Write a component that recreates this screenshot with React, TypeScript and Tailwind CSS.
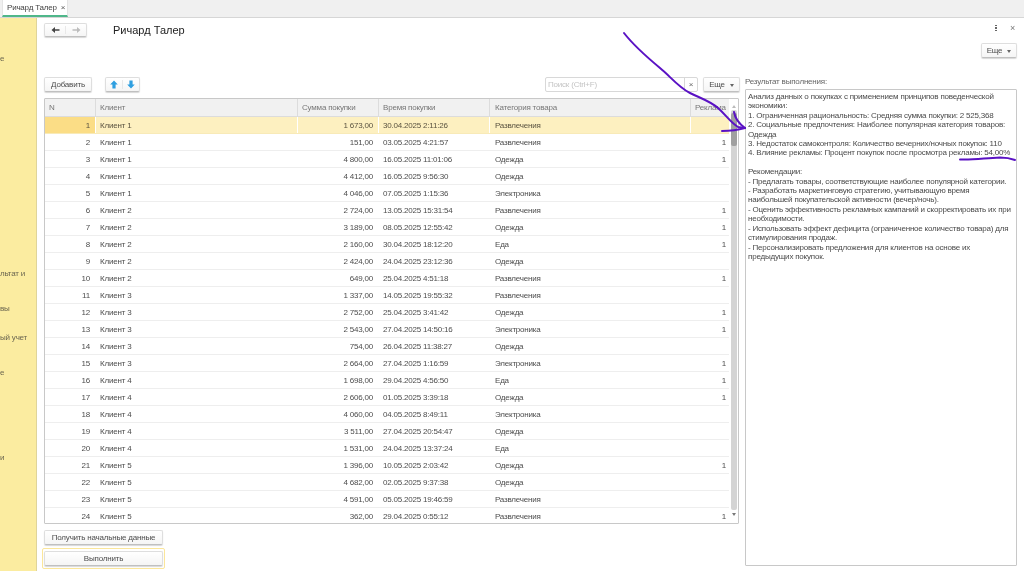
const rows: [number, string, string, string, string, string][] = [
  [1, "Клиент 1", "1 673,00", "30.04.2025 2:11:26", "Развлечения", ""],
  [2, "Клиент 1", "151,00", "03.05.2025 4:21:57", "Развлечения", "1"],
  [3, "Клиент 1", "4 800,00", "16.05.2025 11:01:06", "Одежда", "1"],
  [4, "Клиент 1", "4 412,00", "16.05.2025 9:56:30", "Одежда", ""],
  [5, "Клиент 1", "4 046,00", "07.05.2025 1:15:36", "Электроника", ""],
  [6, "Клиент 2", "2 724,00", "13.05.2025 15:31:54", "Развлечения", "1"],
  [7, "Клиент 2", "3 189,00", "08.05.2025 12:55:42", "Одежда", "1"],
  [8, "Клиент 2", "2 160,00", "30.04.2025 18:12:20", "Еда", "1"],
  [9, "Клиент 2", "2 424,00", "24.04.2025 23:12:36", "Одежда", ""],
  [10, "Клиент 2", "649,00", "25.04.2025 4:51:18", "Развлечения", "1"],
  [11, "Клиент 3", "1 337,00", "14.05.2025 19:55:32", "Развлечения", ""],
  [12, "Клиент 3", "2 752,00", "25.04.2025 3:41:42", "Одежда", "1"],
  [13, "Клиент 3", "2 543,00", "27.04.2025 14:50:16", "Электроника", "1"],
  [14, "Клиент 3", "754,00", "26.04.2025 11:38:27", "Одежда", ""],
  [15, "Клиент 3", "2 664,00", "27.04.2025 1:16:59", "Электроника", "1"],
  [16, "Клиент 4", "1 698,00", "29.04.2025 4:56:50", "Еда", "1"],
  [17, "Клиент 4", "2 606,00", "01.05.2025 3:39:18", "Одежда", "1"],
  [18, "Клиент 4", "4 060,00", "04.05.2025 8:49:11", "Электроника", ""],
  [19, "Клиент 4", "3 511,00", "27.04.2025 20:54:47", "Одежда", ""],
  [20, "Клиент 4", "1 531,00", "24.04.2025 13:37:24", "Еда", ""],
  [21, "Клиент 5", "1 396,00", "10.05.2025 2:03:42", "Одежда", "1"],
  [22, "Клиент 5", "4 682,00", "02.05.2025 9:37:38", "Одежда", ""],
  [23, "Клиент 5", "4 591,00", "05.05.2025 19:46:59", "Развлечения", ""],
  [24, "Клиент 5", "362,00", "29.04.2025 0:55:12", "Развлечения", "1"],
];

const resultLines = [
  "Анализ данных о покупках с применением принципов поведенческой экономики:",
  "1. Ограниченная рациональность: Средняя сумма покупки: 2 525,368",
  "2. Социальные предпочтения: Наиболее популярная категория товаров: Одежда",
  "3. Недостаток самоконтроля: Количество вечерних/ночных покупок: 110",
  "4. Влияние рекламы: Процент покупок после просмотра рекламы: 54,00%",
  "\u00a0",
  "Рекомендации:",
  "- Предлагать товары, соответствующие наиболее популярной категории.",
  "- Разработать маркетинговую стратегию, учитывающую время наибольшей покупательской активности (вечер/ночь).",
  "- Оценить эффективность рекламных кампаний и скорректировать их при необходимости.",
  "- Использовать эффект дефицита (ограниченное количество товара) для стимулирования продаж.",
  "- Персонализировать предложения для клиентов на основе их предыдущих покупок.",
];

const btn =
  "flex items-center justify-center whitespace-nowrap rounded-[2px] border border-[#dedede] border-b-[#c0c0c0] bg-gradient-to-b from-white to-[#f5f5f5] shadow-[0_1px_1px_#d8d8d8]";

function Caret() {
  return <span className="ml-[5px] mt-[2px] h-0 w-0 border-x-[2px] border-t-[3px] border-x-transparent border-t-[#666]" />;
}

function NavArrow({ flip, color }: { flip?: boolean; color: string }) {
  return (
    <svg width="9" height="8" viewBox="0 0 9 8" className={flip ? "rotate-180" : ""}>
      <path d="M0.5 4 L4 1 V3.2 H8.5 V4.8 H4 V7 Z" fill={color} />
    </svg>
  );
}

function BlueArrow({ flip }: { flip?: boolean }) {
  return (
    <svg width="8" height="9" viewBox="0 0 8 9" className={flip ? "rotate-180" : ""}>
      <path d="M4 0.5 L7.8 4.6 H5.6 V8.5 H2.4 V4.6 H0.2 Z" fill="#2f9fe0" />
    </svg>
  );
}

export default function App() {
  return (
    <div className="relative flex h-[571px] w-[1024px] flex-col overflow-hidden bg-white font-['Liberation_Sans',Arial,sans-serif] text-[8px] tracking-[-0.2px] text-[#4d4d4d] blur-[0.3px]">
      {/* Tab strip */}
      <div className="flex h-[18px] shrink-0 border-b border-[#d6d6d6] bg-[#f0f0f0]">
        <div className="ml-[2px] flex h-[17px] w-[66px] items-center whitespace-nowrap border-x border-[#e4e4e4] border-b-2 border-b-[#4fb78a] bg-white pl-[4px] text-[#444]">
          Ричард Талер
          <span className="ml-[4px] text-[8px] text-[#555]">×</span>
        </div>
      </div>

      <div className="flex min-h-0 flex-1">
        {/* Sidebar */}
        <div className="flex w-[37px] shrink-0 flex-col overflow-hidden border-r border-[#dfd49a] bg-[#fbeca0] text-[#6b6650]">
          <div className="mt-[36px] h-[10px] leading-[10px]">е</div>
          <div className="mt-[205px] h-[10px] whitespace-nowrap leading-[10px]">льтат и</div>
          <div className="mt-[25px] h-[10px] leading-[10px]">вы</div>
          <div className="mt-[19px] h-[10px] whitespace-nowrap leading-[10px]">ый учет</div>
          <div className="mt-[25px] h-[10px] leading-[10px]">е</div>
          <div className="mt-[75px] h-[10px] leading-[10px]">и</div>
        </div>

        {/* Main */}
        <div className="flex min-w-0 flex-1 flex-col pl-[7px] pr-[7px]">
          {/* Header */}
          <div className="flex h-[25px] shrink-0 items-start pt-[5px]">
            <div className={`${btn} h-[14px] w-[43px]`}>
              <div className="flex flex-1 justify-center border-r border-[#e8e8e8]">
                <NavArrow color="#444" />
              </div>
              <div className="flex flex-1 justify-center">
                <NavArrow flip color="#bdbdbd" />
              </div>
            </div>
            <div className="ml-[26px] text-[11px] leading-[14px] tracking-normal text-[#222]">Ричард Талер</div>
            <div className="ml-auto flex items-center gap-[13px] pr-[2px] text-[#777]">
              <span className="flex flex-col gap-[1px]">
                <span className="h-[1.5px] w-[1.5px] bg-[#666]" />
                <span className="h-[1.5px] w-[1.5px] bg-[#666]" />
                <span className="h-[1.5px] w-[1.5px] bg-[#666]" />
              </span>
              <span className="text-[9px] leading-[10px]">×</span>
            </div>
          </div>
          <div className="flex h-[34px] shrink-0 justify-end">
            <div className={`${btn} h-[15px] w-[36px]`}>
              Еще
              <Caret />
            </div>
          </div>

          {/* Body */}
          <div className="flex min-h-0 flex-1">
            {/* Left */}
            <div className="flex w-[696px] shrink-0 flex-col">
              <div className="flex h-[21px] shrink-0 items-start">
                <div className={`${btn} h-[15px] w-[48px]`}>Добавить</div>
                <div className={`${btn} ml-[13px] h-[15px] w-[35px]`}>
                  <div className="flex flex-1 justify-center border-r border-[#e8e8e8]">
                    <BlueArrow />
                  </div>
                  <div className="flex flex-1 justify-center">
                    <BlueArrow flip />
                  </div>
                </div>
                <div className="ml-auto flex h-[15px] w-[153px] items-center rounded-[2px] border border-[#d8d8d8] pl-[2px] text-[#c4c4c4]">
                  Поиск (Ctrl+F)
                  <span className="ml-auto flex h-full w-[13px] items-center justify-center border-l border-[#d8d8d8] text-[#666]">×</span>
                </div>
                <div className={`${btn} ml-[5px] h-[15px] w-[37px]`}>
                  Еще
                  <Caret />
                </div>
              </div>

              {/* Table */}
              <div className="flex h-[426px] w-[695px] shrink-0 rounded-[1px] border border-[#c8c8c8]">
                <div className="min-w-0 flex-1">
                  <div className="flex h-[18px] items-center border-b border-[#dcdcdc] bg-[#f1f1f1] leading-[17px] text-[#777]">
                    <div className="h-full w-[50px] pl-[4px]">N</div>
                    <div className="h-full w-[202px] border-l border-[#dcdcdc] pl-[4px]">Клиент</div>
                    <div className="h-full w-[81px] border-l border-[#dcdcdc] pl-[4px]">Сумма покупки</div>
                    <div className="h-full w-[111px] border-l border-[#dcdcdc] pl-[4px]">Время покупки</div>
                    <div className="h-full w-[201px] border-l border-[#dcdcdc] pl-[5px]">Категория товара</div>
                    <div className="h-full flex-1 border-l border-[#dcdcdc] pl-[4px]">Реклама</div>
                  </div>
                  {rows.map((r, i) => {
                    const sel = i === 0;
                    const sep = sel ? "border-white" : "border-transparent";
                    return (
                      <div
                        key={r[0]}
                        className={`flex h-[17px] items-center border-b leading-[17px] ${sel ? "border-b-[#f8eab8] bg-[#fdf0c0] text-[#5a5340]" : "border-b-[#eeeeee]"} ${i === 23 ? "border-b-0" : ""}`}
                      >
                        <div className={`h-full w-[50px] pr-[5px] text-right ${sel ? "bg-[#fbdd86]" : ""}`}>{r[0]}</div>
                        <div className={`h-full w-[202px] border-l pl-[4px] ${sep}`}>{r[1]}</div>
                        <div className={`h-full w-[81px] border-l pr-[5px] text-right ${sep}`}>{r[2]}</div>
                        <div className={`h-full w-[111px] border-l pl-[4px] ${sep}`}>{r[3]}</div>
                        <div className={`h-full w-[201px] border-l pl-[5px] ${sep}`}>{r[4]}</div>
                        <div className={`h-full flex-1 border-l pr-[3px] text-right ${sep}`}>{r[5]}</div>
                      </div>
                    );
                  })}
                </div>
                {/* Scrollbar */}
                <div className="flex w-[9px] shrink-0 flex-col items-center">
                  <span className="mt-[6px] h-0 w-0 border-x-[2px] border-b-[3px] border-x-transparent border-b-[#bbb]" />
                  <div className="mt-[2px] flex h-[400px] w-[6px] flex-col rounded-[2px] bg-[#d4d4d4]">
                    <div className="mt-[3px] h-[33px] w-full rounded-[2px] bg-[#a0a0a0]" />
                  </div>
                  <span className="mt-[3px] h-0 w-0 border-x-[2px] border-t-[3px] border-x-transparent border-t-[#777]" />
                </div>
              </div>

              <div className={`${btn} mt-[6px] h-[15px] w-[119px] shrink-0`}>Получить начальные данные</div>
              <div className="-ml-[2px] mt-[3px] flex h-[21px] w-[123px] shrink-0 items-center justify-center rounded-[2px] border border-[#fbe69a] bg-white">
                <div className={`${btn} h-[15px] w-[119px]`}>Выполнить</div>
              </div>
            </div>

            {/* Right */}
            <div className="ml-[5px] flex min-w-0 flex-1 flex-col pb-[5px]">
              <div className="-mt-[1px] h-[13px] shrink-0 leading-[12px] text-[#666]">Результат выполнения:</div>
              <div className="flex-1 rounded-[1px] border border-[#c8c8c8] px-[2px] py-[2px] leading-[9.4px] text-[#4a4a4a]">
                {resultLines.map((l, i) => (
                  <div key={i}>{l}</div>
                ))}
              </div>
            </div>
          </div>
        </div>
      </div>

      {/* Hand-drawn annotation over the page */}
      <svg className="pointer-events-none absolute left-0 top-0" width="1024" height="571" viewBox="0 0 1024 571" fill="none">
        <g stroke="#5a12c4" strokeWidth="2" strokeLinecap="round" strokeLinejoin="round">
          <path d="M624 33 C 634 46, 648 58, 660 68 C 670 76, 678 87, 690 93 C 700 98, 710 101, 718 108 C 726 115, 730 122, 738 127 L 745 128" />
          <path d="M734 112 C 735 118, 738 123, 745 128" />
          <path d="M722 131 C 730 131, 738 130, 745 128" />
          <path d="M960 159.5 C 975 160, 985 158, 1000 157.5 C 1006 157.5, 1011 158.5, 1015 160" />
        </g>
      </svg>
    </div>
  );
}
